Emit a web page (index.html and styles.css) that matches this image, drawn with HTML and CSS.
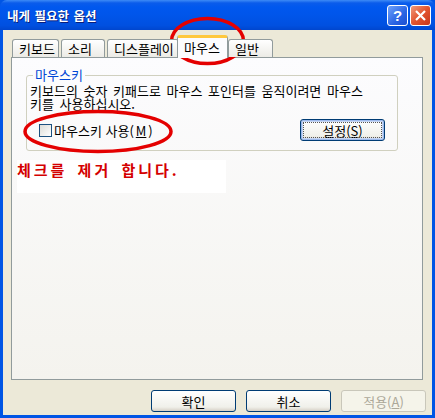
FILE: index.html
```html
<!DOCTYPE html>
<html lang="ko">
<head>
    <meta charset="UTF-8">
    <title>내게 필요한 옵션</title>
    <link rel="stylesheet" href="styles.css">
</head>
<body>

    <div class="window">
        <div class="titlebar">
            <span class="title">내게 필요한 옵션</span>
            <div class="caption-buttons">
                <span class="cap-btn help">?</span>
                <span class="cap-btn close">
                    <svg width="13" height="13" viewBox="0 0 13 13"><path d="M2 2 L11 11 M11 2 L2 11" stroke="#fff" stroke-width="2.2" fill="none"/></svg>
                </span>
            </div>
        </div>

        <div class="client">
            <!-- 탭 -->
            <div class="tabs">
                <span class="tab tab-keyboard">키보드</span>
                <span class="tab tab-sound">소리</span>
                <span class="tab tab-display">디스플레이</span>
                <span class="tab tab-mouse active">마우스</span>
                <span class="tab tab-general">일반</span>
            </div>

            <div class="panel">
                <fieldset class="group">
                    <legend>마우스키</legend>
                    <p class="desc">키보드의 숫자 키패드로 마우스 포인터를 움직이려면 마우스<br>키를 사용하십시오.</p>
                    <div class="group-row">
                        <label class="check">
                            <span class="box"></span>
                            마우스키 사용(<u>M</u>)
                        </label>
                        <span class="btn focused">설정(<u>S</u>)</span>
                    </div>
                </fieldset>

                <div class="note">체크를 제거 합니다.</div>
            </div>

            <div class="buttons">
                <span class="btn">확인</span>
                <span class="btn">취소</span>
                <span class="btn disabled">적용(<u>A</u>)</span>
            </div>
        </div>

        <!-- 빨간 표시 -->
        <svg class="marks" width="435" height="418" viewBox="0 0 435 418">
            <ellipse cx="207.5" cy="41" rx="36" ry="22.5" stroke="#e40000" stroke-width="3.5" fill="none"/>
            <ellipse cx="98" cy="131.5" rx="73" ry="20" stroke="#e40000" stroke-width="3.5" fill="none"/>
        </svg>
    </div>

</body>
</html>
```

FILE: styles.css
```css
body {
    margin: 0;
    font-family: "Noto Sans CJK KR", sans-serif;
    font-size: 12px;
    color: #000;
}
.window {
    position: relative;
    width: 435px;
    height: 418px;
    box-sizing: border-box;
    background: #0055e5;
    display: flex;
    flex-direction: column;
}
.titlebar {
    height: 30px;
    flex: none;
    display: flex;
    align-items: center;
    justify-content: space-between;
    padding: 0 4px 0 7px;
    background: linear-gradient(to bottom, #3d8bf6 0, #0a5ceb 3px, #0058ee 7px, #0055ea 50%, #0050e0 85%, #0046ce 100%);
    border-radius: 7px 7px 0 0;
}
.title {
    color: #fff;
    font-size: 12.5px;
    font-weight: bold;
    word-spacing: 1px;
    text-shadow: 1px 1px 0 #0a1e7a;
}
.caption-buttons {
    display: flex;
    gap: 2px;
    margin-top: 1px;
}
.cap-btn {
    width: 19px;
    height: 19px;
    border: 1px solid #fff;
    border-radius: 3px;
    display: flex;
    align-items: center;
    justify-content: center;
    color: #fff;
    font-family: "Liberation Sans", sans-serif;
    font-weight: bold;
    font-size: 15px;
}
.help {
    background: linear-gradient(135deg, #6ea2fb, #2a64e4 60%, #1c4fd0);
}
.close {
    background: linear-gradient(135deg, #f09a7c, #e2542f 50%, #c8361a);
}
.client {
    flex: 1;
    margin: 0 3px 3px;
    background: #ece9d8;
    padding: 5px 9px 0 8px;
    display: flex;
    flex-direction: column;
}
.tabs {
    display: flex;
    align-items: flex-end;
    height: 22px;
    padding-left: 1px;
    position: relative;
    z-index: 1;
}
.tab {
    height: 18px;
    box-sizing: border-box;
    margin-right: 2px;
    padding: 0 6px;
    border: 1px solid #919b9c;
    border-bottom: none;
    border-radius: 3px 3px 0 0;
    background: linear-gradient(to bottom, #fff, #ecebe6);
    font-size: 13px;
    line-height: 17px;
    white-space: nowrap;
    overflow: hidden;
}
.tab-keyboard { width: 47px; }
.tab-sound { width: 44px; }
.tab-display { width: 72px; margin-right: 0; }
.tab-general { width: 45px; }
.tab.active {
    width: 51px;
    height: 23px;
    margin: 0 0 -1px -2px;
    padding-left: 6px;
    line-height: 20px;
    background: #fcfcfe;
    border-top: 3px solid #ffc83c;
    position: relative;
}
.panel {
    width: 412px;
    height: 323px;
    box-sizing: border-box;
    border: 1px solid #919b9c;
    background: linear-gradient(to bottom, #fcfcfe, #f4f3ee);
    padding: 9px 24px 0 14px;
}
.group {
    margin: 0;
    padding: 0 12px 9px 3px;
    border: 1px solid #d0d0bf;
    border-radius: 3px;
}
.group legend {
    color: #0046d5;
    padding: 0 2px;
    margin-left: 3px;
    font-size: 13px;
    line-height: 16px;
}
.desc {
    margin: 1px 0 0;
    font-size: 13px;
    line-height: 13px;
    word-spacing: 2px;
}
.group-row {
    display: flex;
    align-items: center;
    justify-content: space-between;
    margin-top: 9px;
    font-size: 13px;
}
.check {
    display: flex;
    align-items: center;
    gap: 2px;
    margin-left: 9px;
}
.box {
    width: 11px;
    height: 11px;
    border: 1px solid #1c5180;
    background: linear-gradient(135deg, #dcdcd7, #fff);
}
.btn {
    width: 85px;
    height: 22px;
    box-sizing: border-box;
    border: 1px solid #003c74;
    border-radius: 3px;
    background: linear-gradient(to bottom, #fff, #f0f0ea 80%, #d6d0c5);
    display: flex;
    align-items: center;
    justify-content: center;
    font-size: 13px;
}
.btn.focused {
    box-shadow: inset 0 0 0 1px #9db9eb, inset 0 0 0 2px #c6d6f3;
    outline: 1px dotted #555;
    outline-offset: -4px;
}
.btn.disabled {
    border-color: #c9c7ba;
    background: #f5f4ea;
    color: #aca899;
}
.note {
    width: 209px;
    height: 33px;
    margin: 9px 0 0 -9px;
    padding-top: 2px;
    box-sizing: border-box;
    background: #fff;
    color: #d40000;
    font-size: 15px;
    font-weight: bold;
    letter-spacing: 3px;
    word-spacing: 3px;
    line-height: 16px;
}
.buttons {
    display: flex;
    justify-content: flex-end;
    gap: 10px;
    margin: 10px -3px 0 0;
}
.marks {
    position: absolute;
    top: 0;
    left: 0;
    pointer-events: none;
}
```
